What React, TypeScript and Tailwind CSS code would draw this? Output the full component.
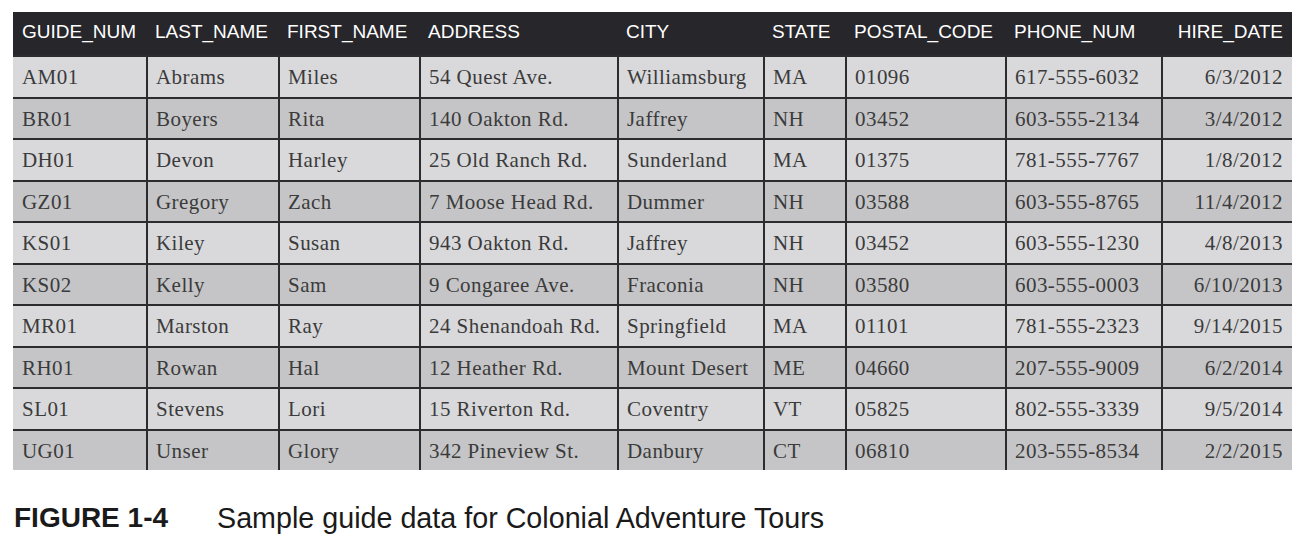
import React from "react";

const cols = [
  { key: "GUIDE_NUM", w: "w-[133px]" },
  { key: "LAST_NAME", w: "w-[132px]" },
  { key: "FIRST_NAME", w: "w-[141px]" },
  { key: "ADDRESS", w: "w-[198px]" },
  { key: "CITY", w: "w-[146px]" },
  { key: "STATE", w: "w-[82px]" },
  { key: "POSTAL_CODE", w: "w-[160px]" },
  { key: "PHONE_NUM", w: "w-[156px]" },
  { key: "HIRE_DATE", w: "w-[131px]" },
];

const rows: string[][] = [
  ["AM01", "Abrams", "Miles", "54 Quest Ave.", "Williamsburg", "MA", "01096", "617-555-6032", "6/3/2012"],
  ["BR01", "Boyers", "Rita", "140 Oakton Rd.", "Jaffrey", "NH", "03452", "603-555-2134", "3/4/2012"],
  ["DH01", "Devon", "Harley", "25 Old Ranch Rd.", "Sunderland", "MA", "01375", "781-555-7767", "1/8/2012"],
  ["GZ01", "Gregory", "Zach", "7 Moose Head Rd.", "Dummer", "NH", "03588", "603-555-8765", "11/4/2012"],
  ["KS01", "Kiley", "Susan", "943 Oakton Rd.", "Jaffrey", "NH", "03452", "603-555-1230", "4/8/2013"],
  ["KS02", "Kelly", "Sam", "9 Congaree Ave.", "Fraconia", "NH", "03580", "603-555-0003", "6/10/2013"],
  ["MR01", "Marston", "Ray", "24 Shenandoah Rd.", "Springfield", "MA", "01101", "781-555-2323", "9/14/2015"],
  ["RH01", "Rowan", "Hal", "12 Heather Rd.", "Mount Desert", "ME", "04660", "207-555-9009", "6/2/2014"],
  ["SL01", "Stevens", "Lori", "15 Riverton Rd.", "Coventry", "VT", "05825", "802-555-3339", "9/5/2014"],
  ["UG01", "Unser", "Glory", "342 Pineview St.", "Danbury", "CT", "06810", "203-555-8534", "2/2/2015"],
];

export default function App() {
  return (
    <div className="w-[1299px] h-[534px] bg-white overflow-hidden pl-[13px] pt-[12px]">
      <div className="w-[1279px]">
        {/* Header */}
        <div className="flex h-[43px] bg-[#27262b] text-white text-[19px] leading-[19px] pb-[4px] items-center font-['Liberation_Sans',Arial,sans-serif]">
          {cols.map((c, i) => (
            <div
              key={c.key}
              className={
                c.w +
                (i === cols.length - 1
                  ? " shrink-0 pr-[9px] text-right whitespace-nowrap"
                  : " shrink-0 pl-[9px] whitespace-nowrap")
              }
            >
              {c.key}
            </div>
          ))}
        </div>
        {/* Body */}
        {rows.map((r, ri) => (
          <div
            key={ri}
            className={
              "flex h-[41.5px] border-t-2 border-[#2c2c2e] text-[#3b3b3b] text-[21px] tracking-[0.45px] font-['Liberation_Serif','Times_New_Roman',serif] " +
              (ri % 2 === 0 ? "bg-[#d9d9db]" : "bg-[#c5c5c7]")
            }
          >
            {r.map((v, ci) => (
              <div
                key={ci}
                className={
                  cols[ci].w +
                  " shrink-0 flex items-center pt-[2px] whitespace-nowrap " +
                  (ci === 0 ? "pl-[9px] " : "border-l-2 border-[#2c2c2e] pl-[8px] ") +
                  (ci === r.length - 1 ? "justify-end pr-[9px]" : "")
                }
              >
                {v}
              </div>
            ))}
          </div>
        ))}
      </div>
      {/* Caption */}
      <div className="mt-[34px] flex text-[28.7px] leading-[28px] text-[#1a1a1a] font-['Liberation_Sans',Arial,sans-serif]">
        <span className="font-bold text-[28px] w-[204px] shrink-0 pl-[1px]">FIGURE 1-4</span>
        <span>Sample guide data for Colonial Adventure Tours</span>
      </div>
    </div>
  );
}
